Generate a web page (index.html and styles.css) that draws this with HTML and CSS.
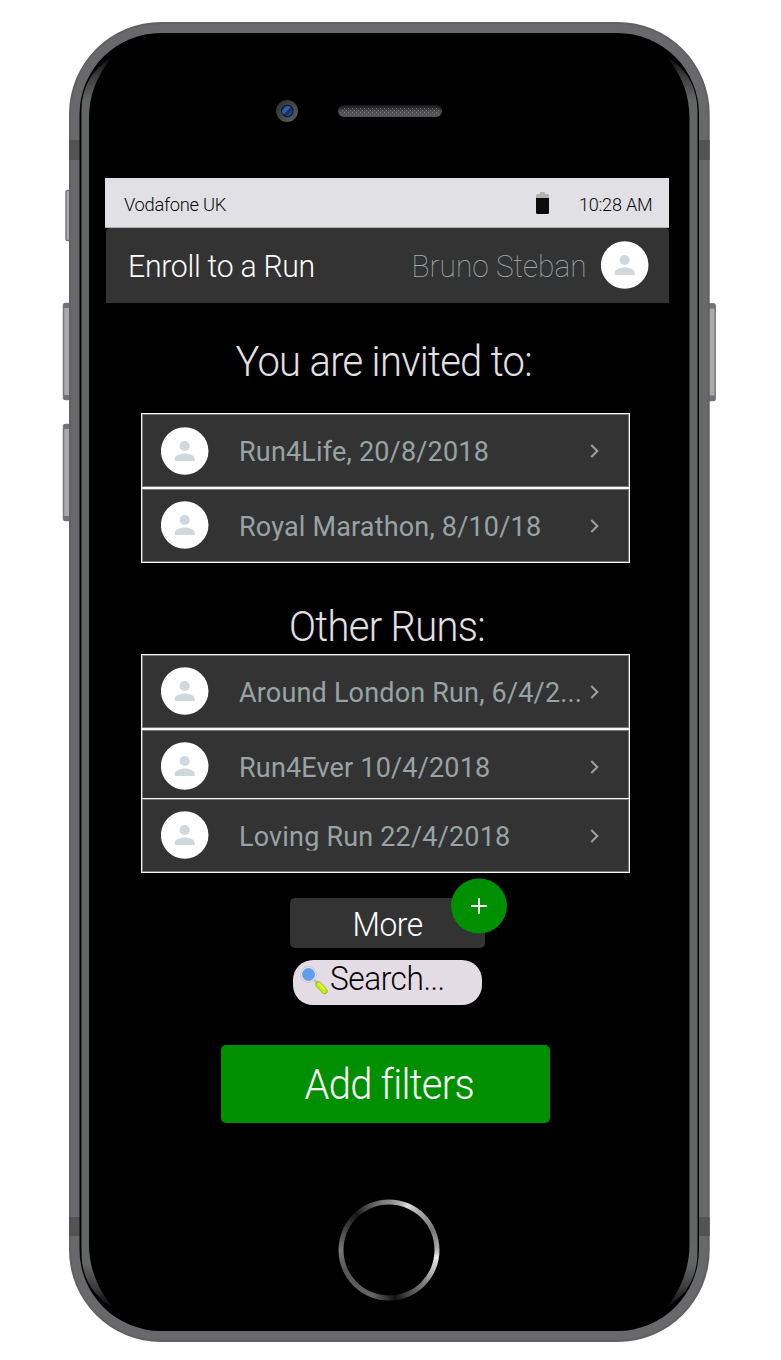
FILE: index.html
```html
<!DOCTYPE html>
<html lang="en">
<head>
<meta charset="utf-8">
<title>Enroll to a Run</title>
<link rel="stylesheet" href="styles.css">
</head>
<body>
<svg width="0" height="0" class="defs">
  <symbol id="avatar" viewBox="0 0 48 48"><circle cx="23.700" cy="24" r="23.8" fill="#fff"/><circle cx="23.700" cy="19" r="5.1" fill="#cfd8dc"/><path d="M13.700 34v-2.3c0-3.4 6.6-5.1 10-5.1s10 1.700 10 5.100V34z" fill="#cfd8dc"/></symbol>
  <symbol id="chevron" viewBox="0 0 10 14"><path d="M1.300 1.100L7.300 7 1.300 12.900" fill="none" stroke="#9d9d9d" stroke-width="2.100"/></symbol>
</svg>
<main class="phone">
  <svg class="device" width="781" height="1360" viewBox="0 0 781 1360" aria-hidden="true">
    <defs>
      <linearGradient id="rim" x1="0" y1="56" x2="0" y2="1308" gradientUnits="userSpaceOnUse"><stop offset="0" stop-color="#050505"/><stop offset=".016" stop-color="#3c3c3c"/><stop offset=".035" stop-color="#646565"/><stop offset=".965" stop-color="#646565"/><stop offset=".984" stop-color="#3c3c3c"/><stop offset="1" stop-color="#050505"/></linearGradient>
      <linearGradient id="speaker" x1="0" y1="0" x2="0" y2="1"><stop offset="0" stop-color="#151515"/><stop offset=".3" stop-color="#303032"/><stop offset=".55" stop-color="#505053"/><stop offset="1" stop-color="#555557"/></linearGradient>
      <linearGradient id="lens" x1="0" y1="0" x2="1" y2="1"><stop offset="0" stop-color="#0d2858"/><stop offset=".4" stop-color="#3768b8"/><stop offset=".55" stop-color="#142b59"/><stop offset=".8" stop-color="#25488b"/><stop offset="1" stop-color="#07142f"/></linearGradient>
      <linearGradient id="camera" x1="0" y1="0" x2="1" y2="1"><stop offset="0" stop-color="#292b2d"/><stop offset="1" stop-color="#606163"/></linearGradient>
      <pattern id="mesh" width="4" height="4" patternUnits="userSpaceOnUse"><path d="M0 0h1v1H0zM2 2h1v1H2z" fill="#747476"/></pattern>
    </defs>
    <g fill="#aaa9ae" stroke="#77777a" stroke-width="1.500">
      <rect x="66" y="190.500" width="8" height="50" rx="1.500"/>
      <rect x="63.500" y="303.500" width="8" height="96" rx="2"/>
      <rect x="63.500" y="424.500" width="8" height="96" rx="2"/>
      <rect x="707" y="304" width="8.200" height="96.500" rx="2"/>
    </g>
    <path d="M64 303h7v5h-7zM64 395h7v5h-7zM64 424h7v5h-7zM64 516h7v5h-7zM708 303.500h7v5h-7zM708 395.500h7v5h-7z" fill="#727275"/>
    <rect x="69" y="22" width="640.700" height="1320" rx="92" fill="#606163"/>
    <rect x="71" y="24" width="636.700" height="1316" rx="90" fill="#69696b"/>
    <path d="M69 140h11v20H69zM699 140h10.700v20H699zM69 1217h11v19H69zM699 1217h10.700v19H699z" fill="#535355"/>
    <rect x="79.500" y="33" width="619.500" height="1298" rx="81.500" fill="#000"/>
    <path d="M112 57C91 70 81.500 88 81.500 112V1252C81.500 1276 91 1294 113 1308C99 1291 89 1269 89 1245V119C89 94 97 76 112 57zM667 57C688 70 697.500 88 697.500 112V1252C697.500 1276 688 1294 666 1308C680 1291 689.500 1269 689.500 1245V119C689.500 94 682 76 667 57z" fill="url(#rim)"/>
    <circle cx="287" cy="111" r="10.900" fill="url(#camera)"/><circle cx="287.300" cy="111" r="6.200" fill="#08132c"/><circle cx="287.300" cy="111" r="5.300" fill="url(#lens)"/>
    <rect x="338" y="105" width="104" height="12" rx="6" fill="url(#speaker)"/><rect x="340" y="108" width="100" height="7" rx="3.500" fill="url(#mesh)"/>
  </svg>
  <section class="screen">
    <div class="status">
      <span class="carrier">Vodafone UK</span>
      <svg class="battery" width="14" height="23" viewBox="0 0 14 23"><path d="M0 7V3.500Q0 2 1.500 2H4V0h5v2h2.500Q13 2 13 3.500V7z" fill="#b2b2b5"/><path d="M0 6h13v14.500Q13 22 11.500 22h-10Q0 22 0 20.500z" fill="#0b0c0b"/></svg>
      <span class="time">10:28 AM</span>
    </div>
    <header class="header">
      <h1 class="title">Enroll to a Run</h1>
      <span class="user">Bruno Steban</span>
      <svg class="avatar"><use href="#avatar"/></svg>
    </header>
    <h2 class="heading invited">You are invited to:</h2>
    <ul class="list">
      <li class="row"><svg class="avatar"><use href="#avatar"/></svg><span class="label">Run4Life, 20/8/2018</span><svg class="chevron"><use href="#chevron"/></svg></li>
      <li class="row"><svg class="avatar"><use href="#avatar"/></svg><span class="label">Royal Marathon, 8/10/18</span><svg class="chevron"><use href="#chevron"/></svg></li>
    </ul>
    <h2 class="heading other">Other Runs:</h2>
    <ul class="list">
      <li class="row"><svg class="avatar"><use href="#avatar"/></svg><span class="label">Around London Run, 6/4/2...</span><svg class="chevron"><use href="#chevron"/></svg></li>
      <li class="row overlapped"><svg class="avatar"><use href="#avatar"/></svg><span class="label">Run4Ever 10/4/2018</span><svg class="chevron"><use href="#chevron"/></svg></li>
      <li class="row"><svg class="avatar"><use href="#avatar"/></svg><span class="label">Loving Run 22/4/2018</span><svg class="chevron"><use href="#chevron"/></svg></li>
    </ul>
    <div class="more"><span class="more-text">More</span>
      <svg class="plus" width="56" height="56" viewBox="0 0 56 56"><ellipse cx="28" cy="28" rx="28" ry="27.500" fill="#008f00"/><path d="M20.200 28h15.600M28 20.200v15.600" stroke="#fff" stroke-width="2"/></svg>
    </div>
    <div class="search">
      <svg width="30" height="36" viewBox="0 0 30 36"><path d="M13.500 19l4 4" stroke="#b9b8bd" stroke-width="2"/><circle cx="8.500" cy="14.500" r="7.900" fill="#e9e7e5" stroke="#c8c5c9"/><circle cx="8.500" cy="14.500" r="6.500" fill="#609eed"/><path d="M18.500 24.500l6 6.500" stroke="#86b51c" stroke-width="6.200" stroke-linecap="round"/><path d="M18.500 24.500l6 6.500" stroke="#bfee08" stroke-width="4.800" stroke-linecap="round"/><path d="M19.500 24l4.500 5" stroke="#e4ff39" stroke-width="2" stroke-linecap="round"/></svg>
      <span class="search-text">Search...</span>
    </div>
    <div class="filters"><span class="filters-text">Add filters</span></div>
    <svg class="home" width="102" height="102" viewBox="0 0 102 102">
      <defs><clipPath id="ring"><path clip-rule="evenodd" d="M51 .5a50.500 50.500 0 1 0 0 101 50.500 50.500 0 1 0 0-101M51 5.500a45.500 45.500 0 1 1 0 91 45.500 45.500 0 1 1 0-91"/></clipPath></defs>
      <foreignObject width="102" height="102" clip-path="url(#ring)"><div class="sheen"></div></foreignObject>
    </svg>
  </section>
</main>
</body>
</html>
```
FILE: styles.css
```css
* { box-sizing: border-box; }
body { margin: 0; background: #fff; font-family: Roboto, sans-serif; font-weight: 300; }
h1, h2, ul { margin: 0; padding: 0; font-weight: 300; }
ul { list-style: none; }
svg { display: block; flex: none; }
span, h1, h2 { white-space: nowrap; }
.defs { position: absolute; }
.phone { position: relative; width: 781px; height: 1360px; overflow: hidden; }
.device { position: absolute; inset: 0; }
.screen { position: relative; width: 564px; margin-left: 105px; padding-top: 178px; display: flex; flex-direction: column; }
.status { height: 50px; display: flex; align-items: center; padding: 3px 17px 0 19px; background: #e1e0e5; border-bottom: 1px solid #aeb2b9; color: #080808; font-size: 19px; }
.carrier { transform: scaleX(.965); transform-origin: left; letter-spacing: -.3px; }
.battery { margin-left: auto; margin-right: 25px; margin-top: -2px; }
.time { transform: scaleX(.95); transform-origin: right; letter-spacing: -.2px; }
.header { height: 75px; margin-left: 1px; display: flex; align-items: center; padding: 0 20px 0 22px; background: #333; border-radius: 4px 4px 0 0; }
.title { color: #fff; font-size: 31px; transform: scaleX(.975); transform-origin: left; letter-spacing: -.3px; padding-top: 2px; }
.user { color: #a2adb1; font-size: 30.500px; font-weight: 100; transform: scaleX(.98); transform-origin: right; margin-left: auto; margin-right: 14px; padding-top: 1px; }
.avatar { width: 48px; height: 48px; }
.header .avatar { margin-bottom: 1px; }
.heading { color: #e2e0e3; font-size: 42px; line-height: 50px; transform: scaleX(.95); letter-spacing: -.7px; text-align: center; }
.invited { margin-top: 34px; padding-right: 7px; }
.other { margin-top: 39px; }
.invited + .list { margin-top: 26px; }
.other + .list { margin-top: 2px; }
.list { width: 489px; margin-left: 36px; }
.row { position: relative; height: 75px; display: flex; align-items: center; padding: 0 29px 0 18.500px; background: #333; border: 1px solid #f5f5f5; box-shadow: inset 0 0 0 1px #777; }
.row.overlapped { margin-bottom: -6px; }
.row:not(:first-child) .avatar, .other + .list .avatar { margin-bottom: 1px; }
.label { width: 347px; height: 32px; margin: 3px 0 0 30.500px; clip-path: inset(0 0 2.500px 0); color: #98a3a6; font-size: 27px; font-weight: 400; line-height: 32px; letter-spacing: .18px; }
.chevron { width: 10px; height: 14px; margin-left: auto; }
.more { position: relative; width: 195px; height: 50px; margin: 25px 0 0 185px; background: #333; border-radius: 5px; color: #fff; font-size: 33px; line-height: 53px; text-align: center; }
.more-text { display: inline-block; transform: scaleX(.96); letter-spacing: -.4px; }
.plus { position: absolute; left: 161px; top: -20px; }
.search { width: 189px; height: 45px; margin: 12px 0 0 188px; padding-left: 7px; display: flex; background: #e3dce4; border-radius: 20px; color: #050505; font-size: 33px; line-height: 38px; }
.search-text { transform: scaleX(.96); transform-origin: left; letter-spacing: -.5px; }
.filters { width: 329px; height: 78px; margin: 40px 0 0 116px; padding-left: 8px; background: #008f00; border-radius: 5px; color: #fff; font-size: 42px; line-height: 79px; text-align: center; }
.filters-text { display: inline-block; transform: scaleX(.95); letter-spacing: -.75px; }
.home { margin: 76px 0 0 233px; }
.sheen { width: 102px; height: 102px; background: conic-gradient(#888 0deg, #aaa 12deg, #ddd 23deg, #aaa 38deg, #777 65deg, #aaa 88deg, #eee 99deg, #888 130deg, #444 158deg, #111 173deg, #333 182deg, #666 200deg, #555 245deg, #777 270deg, #444 295deg, #151515 318deg, #444 330deg, #777 350deg, #888 360deg); }
```
